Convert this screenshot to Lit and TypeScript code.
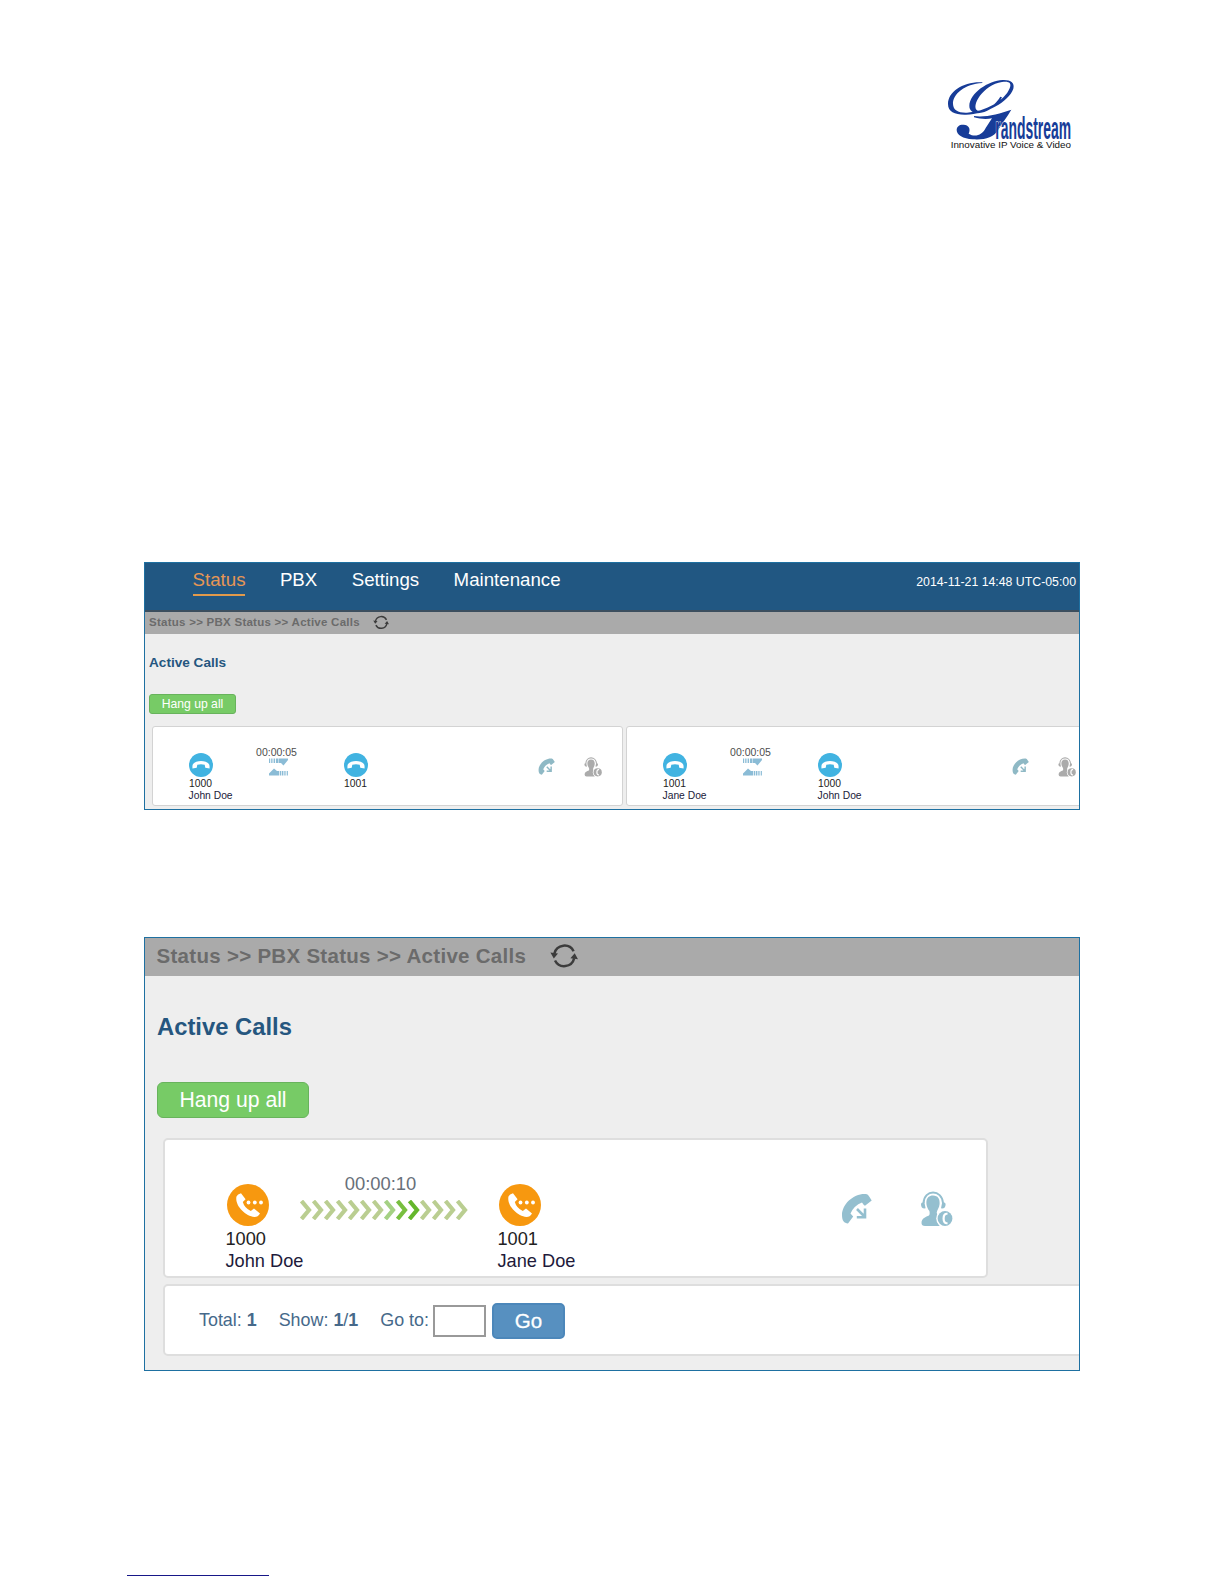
import { LitElement, html, css, svg } from "lit";
import { customElement, property } from "lit/decorators.js";

interface Party { ext: string; name: string }

const refreshIcon = svg`
  <g fill="none" stroke="#3c3c3c" stroke-width="2.5">
    <path d="M4.4 9.5A10.3 10.3 0 0 1 23.6 7.3"/><path d="M24.2 14.3A10.3 10.3 0 0 1 5 16.5"/>
  </g>
  <path fill="#3c3c3c" d="M.4 8.6L8 9.6 3.8 14.4ZM28 15.2L20.4 14.2 24.7 9.2Z"/>`;

const forwardIcon = svg`
  <path d="M1 22C1 11 13 0 25 1Q27 1 28.5 4L30.7 7.5 24 12.8Q22.5 12 21 9.5 13 12.5 9.5 20.5L12.2 23.5 7 30.5C3 30 1 28 1 22Z"/>
  <path fill="none" stroke="currentColor" stroke-width="2.6" d="M16 16L23.5 23.5M24 15.5V24.2H15.8"/>`;

const agentIcon = svg`
  <path d="M12 4.5C17 4.5 19 8 18.6 13 18.3 17 16 19 15.7 21.5Q16 23.5 17 24.5 15 30 18.8 35H4Q.5 35 .5 32C.5 27 5 26 8 24.5 9 23.5 8.7 21 8.3 19.8 4 14 4 4.5 12 4.5Z"/>
  <path fill="none" stroke="currentColor" stroke-width="2" d="M2.6 12C3 -2 21 -2 22 12"/>
  <path d="M0 13.2Q0 11 3.4 11.2L4.6 17.3Q0 18 0 13.2ZM24.6 13.2Q24.6 11 21.2 11.2L20 17.3Q24.6 18 24.6 13.2Z"/>
  <circle cx="24" cy="27.5" r="8.8" fill="#fff"/><circle cx="24" cy="27.5" r="7.4"/>
  <path fill="none" stroke="#fff" stroke-width="2.2" d="M26.5 22.8Q22.6 22.2 22.6 27.5T26.5 32.2"/>`;

@customElement("call-card")
export class CallCard extends LitElement {
  @property({ attribute: false }) from!: Party;
  @property({ attribute: false }) to!: Party;
  @property() time = "";
  @property({ type: Boolean, reflect: true }) ringing = false;

  static styles = css`
    :host { display: block; box-sizing: border-box; flex: none; background: #fff;
      border: 1px solid #d3d3d3; border-radius: 3px; width: 471px; height: 80px;
      padding: 26px 0 0 36px; font-size: 10.3px; line-height: 12px; color: #222; }
    :host([ringing]) { width: 825px; height: 140px; border: 2px solid #dedede; border-radius: 5px;
      padding: 44px 0 0 61.5px; font-size: 18.1px; line-height: 22px; }
    svg { display: block; }
    .row { display: grid; grid-template-columns: 67px 88px 194px 46px 20px; align-items: start; white-space: nowrap; }
    :host([ringing]) .row { grid-template-columns: 73px 199px 342px 80px 34px; }
    .badge { width: 24px; height: 24px; }
    :host([ringing]) .badge { width: 42px; height: 42px; }
    .badge + div { padding-top: 1px; }
    .name { margin-left: -.5px; color: #211a3a; }
    :host([ringing]) .badge + div, :host([ringing]) .name { margin-left: -1px; font-size: 18.2px; }
    .mid { display: flex; flex-direction: column; align-items: center; width: 41px;
      margin-top: -7px; font-size: 10.5px; color: #4e4e4e; }
    :host([ringing]) .mid { width: 168px; margin-top: -11px; font-size: 18.4px; color: #68707a; }
    :host([ringing]) .time { margin-left: -6px; }
    .flow { width: 19px; height: 18px; margin-left: 4px; }
    :host([ringing]) .flow { width: 168px; height: 20px; margin: 5px 0 0; }
    .fwd, .agent { color: #8fb9c5; fill: currentColor; }
    .fwd { width: 17px; height: 17px; margin-top: 5px; }
    .agent { width: 18.5px; height: 20px; margin-top: 4px; color: #ababab; }
    :host([ringing]) .badge + div { padding-top: 2px; }
    :host([ringing]) .fwd { width: 31px; height: 31px; margin-top: 9px; color: #94bfcf; }
    :host([ringing]) .agent { width: 32px; height: 36px; margin-top: 7.5px; color: #94bfcf; }
  `;

  private party(p: Party) {
    return html`<div>
      <svg class="badge" viewBox="0 0 42 42">
        <circle cx="21" cy="21" r="21" fill=${this.ringing ? "#f7980f" : "#41b3e1"}></circle>
        ${this.ringing
          ? svg`<path fill="#fff" d="M9.5 12.5Q10.5 10 14 9.3L18.6 15.2 15.8 18Q17.5 24 23.8 27L27 24.5 33 29.5Q31 33 27.5 33C18 32 7.5 21 9.5 12.5Z"/>
              <circle cx="21.5" cy="18.5" r="1.9" fill="#fff"/><circle cx="27.8" cy="18.5" r="1.9" fill="#fff"/><circle cx="34" cy="18.5" r="1.9" fill="#fff"/>`
          : svg`<path fill="#fff" d="M6 23C6 11 36 11 36 23V27L28.5 26 27.5 20.4Q21 18.6 14.5 20.4L13.5 26 6 27Z"/>`}
      </svg>
      <div>${p.ext}</div><div class="name">${p.name}</div>
    </div>`;
  }

  private flow() {
    if (!this.ringing) {
      return html`<svg class="flow" viewBox="0 0 19 18" fill="#8bbcd6">
        <path d="M0 .5h1.2v4.5H0zM2.2 .5h1.3v4.5H2.2zM4.6 .5h1.5v4.5H4.6zM7 .5h2v4.5H7zM9.5 .5H19V2L14.5 7.5 12 5H9.5zM0 17.5V15.5L5 10.5 8 13H10V17.5zM10.7 13h1.6v4.5h-1.6zM13 13h1.4v4.5H13zM15.3 13h1.3v4.5h-1.3zM17.7 13h1.2v4.5h-1.2z"/></svg>`;
    }
    return html`<svg class="flow" viewBox="0 0 168 20" fill="none" stroke-width="4.2">
      ${Array.from({ length: 14 }, (_, i) => svg`<path d=${`M${i * 12 + 1.5} 1L${i * 12 + 9} 10 ${i * 12 + 1.5} 19`}
        stroke=${i === 9 ? "#64b62c" : i === 8 ? "#78bf3f" : i === 7 ? "#a5d184" : "#bace91"}/>`)}</svg>`;
  }

  render() {
    return html`<div class="row">
      ${this.party(this.from)}
      <div class="mid"><div class="time">${this.time}</div>${this.flow()}</div>
      ${this.party(this.to)}
      <svg class="fwd" viewBox="0 0 31 31">${forwardIcon}</svg>
      <svg class="agent" viewBox="0 0 32 36">${agentIcon}</svg>
    </div>`;
  }
}

@customElement("app-root")
export class AppRoot extends LitElement {
  static styles = css`
    :host { display: flex; flex-direction: column; box-sizing: border-box; width: 1224px; height: 1584px;
      padding: 70px 144px 8px; background: #fff; font-family: "Liberation Sans", Arial, sans-serif; overflow: hidden; }
    .logo { display: block; flex: none; width: 160px; height: 90px; margin-left: 786px; overflow: visible; }
    .panel { box-sizing: border-box; width: 936px; flex: none; border: 1px solid #1e70a1; background: #eee;
      overflow: hidden; white-space: nowrap; }
    .first { height: 248px; margin-top: 402px; }
    .second { height: 434px; margin-top: 127px; }
    .top { display: flex; box-sizing: border-box; height: 48.5px; padding: 6px 3px 0 47.5px; background: #215782;
      border-bottom: 2px solid #3b4e5e; color: #fff; }
    .nav { display: flex; gap: 34.4px; font-size: 18.7px; line-height: 22px; }
    .nav span { height: 25px; }
    .nav .on { color: #e69655; border-bottom: 2px solid #e29a4b; }
    .date { margin-left: auto; font-size: 12.3px; line-height: 27px; }
    .crumb { display: flex; align-items: center; box-sizing: border-box; height: 22.5px; padding: 0 0 1px 4px;
      background: #aaa; color: #6b6b6b; font-weight: bold; font-size: 11.5px; letter-spacing: .26px; }
    .crumb svg { width: 16px; height: 15px; margin-left: 13px; }
    .body { padding-left: 4px; }
    h1 { margin: 0; padding-top: 20px; color: #25567f; font-size: 13.6px; line-height: 17px; }
    .hang { display: flex; align-items: center; justify-content: center; box-sizing: border-box; width: 87px;
      height: 20px; margin-top: 23px; border: 1px solid #68b35c; border-radius: 3px; background: #77cb66;
      color: #fff; font-size: 12.2px; }
    .cards { display: flex; gap: 3px; padding: 12px 0 0 3px; }
    .second .crumb { height: 37.5px; padding: 0 0 1px 11.5px; font-size: 20.5px; letter-spacing: .29px; }
    .second .crumb svg { width: 28px; height: 24px; margin-left: 24px; margin-top: -1px; }
    .second .body { padding-left: 12px; }
    .second h1 { padding-top: 37px; font-size: 23.8px; line-height: 28px; }
    .second .hang { width: 152px; height: 36px; margin: 41px 0 0; font-size: 21.2px; border-width: 1.5px;
      border-radius: 6px; }
    .second .cards { padding: 20px 0 0 6px; }
    .pager { display: flex; align-items: center; box-sizing: border-box; width: 940px; height: 72px;
      margin: 6px 0 0 6px; padding-left: 34px; background: #fff; border: 2px solid #dedede; border-radius: 5px;
      color: #46698a; font-size: 17.9px; }
    .pager span { margin-right: 22px; margin-top: 1px; }
    .pager .goto { margin-right: 4px; }
    .page { box-sizing: border-box; width: 53px; height: 32px; border: 2px solid #999; background: #fff; margin-top: 3px; }
    .go { display: flex; align-items: center; justify-content: center; box-sizing: border-box; width: 73px;
      height: 36px; margin: 3px 0 0 6px; border: 2px solid #4c87ba; border-radius: 5px; background: #5790c0;
      color: #fff; font-size: 20.5px; -webkit-text-stroke: .3px #fff; }
    .rule { width: 142px; height: 1px; margin: auto 0 0 -17px; background: #171788; flex: none; }
  `;

  render() {
    const john = { ext: "1000", name: "John Doe" };
    const jane = { ext: "1001", name: "Jane Doe" };
    const crumb = html`<div class="crumb">Status &gt;&gt; PBX Status &gt;&gt; Active Calls
      <svg viewBox="0 0 28 24">${refreshIcon}</svg></div>`;
    return html`
      <svg class="logo" viewBox="0 0 480 270">
        <g fill="#173c98">
          <path d="M157 37C100 34 54 65 54 102C54 126 76 135 108 134C168 132 236 96 250 56C255 38 242 29 218 30C175 32 119 69 118 108C118 128 139 134 163 126C187 118 207 100 216 82L211 80C194 108 162 128 143 122C120 111 160 43 216 36C236 33 246 38 239 55C224 93 166 125 111 128C85 129 70 121 69 102C68 72 104 42 157 39Z"/>
          <path d="M132 138C165 143 207 132 244 119C230 142 218 158 204 180C190 204 164 210 128 208C99 206 80 195 80 180C80 169 89 163 101 164C116 165 123 176 116 191C136 204 157 194 167 174L186 145C172 148 153 148 132 142Z"/>
        </g>
        <text x="196" y="208" font-family="Liberation Sans" font-weight="bold" font-size="92" fill="#173c98"
          stroke="#fff" stroke-width="3" paint-order="stroke"
          textLength="227" lengthAdjust="spacingAndGlyphs">randstream</text>
        <text x="62" y="235" font-family="Liberation Sans" font-size="25" fill="#111"
          textLength="361" lengthAdjust="spacingAndGlyphs">Innovative IP Voice &amp; Video</text>
      </svg>
      <section class="panel first">
        <div class="top">
          <div class="nav"><span class="on">Status</span><span>PBX</span><span>Settings</span><span>Maintenance</span></div>
          <div class="date">2014-11-21 14:48 UTC-05:00</div>
        </div>
        ${crumb}
        <div class="body">
          <h1>Active Calls</h1>
          <div class="hang">Hang up all</div>
          <div class="cards">
            <call-card .from=${john} .to=${{ ext: "1001", name: "" }} time="00:00:05"></call-card>
            <call-card .from=${jane} .to=${john} time="00:00:05"></call-card>
          </div>
        </div>
      </section>
      <section class="panel second">
        ${crumb}
        <div class="body">
          <h1>Active Calls</h1>
          <div class="hang">Hang up all</div>
          <div class="cards"><call-card ringing .from=${john} .to=${jane} time="00:00:10"></call-card></div>
          <div class="pager">
            <span>Total: <b>1</b></span><span>Show: <b>1</b>/<b>1</b></span><span class="goto">Go to:</span>
            <div class="page"></div><div class="go">Go</div>
          </div>
        </div>
      </section>
      <div class="rule"></div>`;
  }
}
